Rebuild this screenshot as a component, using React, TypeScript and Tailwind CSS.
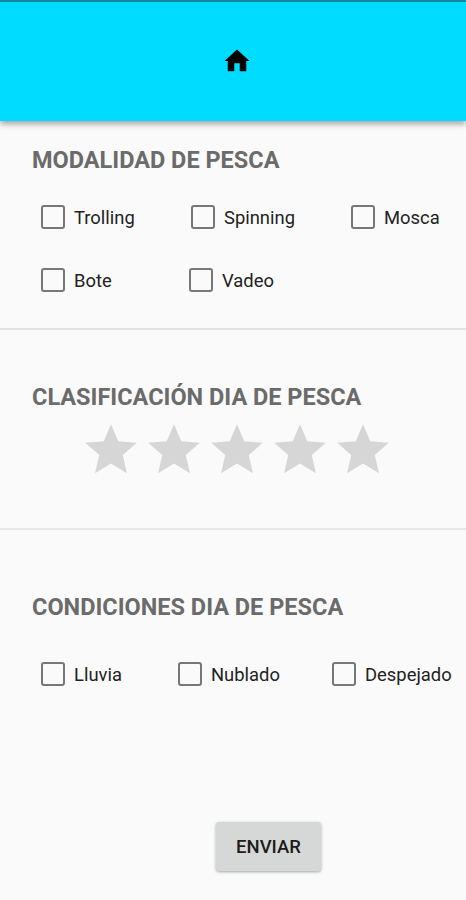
import { useState } from "react";

function HomeIcon() {
  return (
    <svg viewBox="0 0 24 24" fill="#000" className="w-[30px] h-[30px]">
      <path d="M9.8 20.2v-6.4h4.4v6.4h5.2V12H22L12 2.8 2 12h2.6v8.2z" />
    </svg>
  );
}

function Check({ label, className = "" }: { label: string; className?: string }) {
  const [checked, setChecked] = useState(false);

  return (
    <label className={"flex items-center shrink-0 h-6 " + className}>
      <input
        type="checkbox"
        checked={checked}
        onChange={() => setChecked(!checked)}
        className="appearance-none shrink-0 w-6 h-6 rounded-[3px] border-[2.5px] border-[#777777] checked:bg-[#777777]"
      />
      <span className="ml-[9px] pt-0.5 text-[18.4px] leading-6 text-[#222222] whitespace-nowrap">
        {label}
      </span>
    </label>
  );
}

function Title({ children }: { children: string }) {
  return (
    <h2 className="pl-8 text-[23.5px] leading-7 font-bold text-[#6b6b6b] whitespace-nowrap">
      {children}
    </h2>
  );
}

export default function App() {
  const [rating, setRating] = useState(0);

  return (
    <div className="w-full h-[900px] overflow-hidden bg-[#fafafa] font-[Roboto,sans-serif]">
      <div className="h-[2px] bg-[#128ba3]" />
      <header className="h-[119px] pl-[222px] pt-[44px] bg-[#00dcff] shadow-[0_3px_6px_rgba(0,0,0,0.35)]">
        <HomeIcon />
      </header>

      <section className="h-[209px] pt-[25px] border-b-2 border-[#e2e2e2]">
        <Title>MODALIDAD DE PESCA</Title>
        <div className="flex pl-[41px] mt-[31px]">
          <Check label="Trolling" className="w-[150px]" />
          <Check label="Spinning" className="w-[160px]" />
          <Check label="Mosca" />
        </div>
        <div className="flex pl-[41px] mt-[39px]">
          <Check label="Bote" className="w-[148px]" />
          <Check label="Vadeo" />
        </div>
      </section>

      <section className="h-[200px] pt-[53px] border-b-2 border-[#e6e6e6]">
        <Title>CLASIFICACIÓN DIA DE PESCA</Title>
        <div className="flex gap-[1.2px] pl-[79.5px] mt-[8px]">
          {[1, 2, 3, 4, 5].map((n) => (
            <button key={n} onClick={() => setRating(n)} className="shrink-0">
              <svg
                viewBox="0 0 24 24"
                fill={n <= rating ? "#00dcff" : "#d6d6d6"}
                className="w-[62px] h-[62px]"
              >
                <path d="M12 17.27 18.18 21l-1.64-7.03L22 9.24l-7.19-.61L12 2 9.19 8.63 2 9.24l5.46 4.73L5.82 21z" />
              </svg>
            </button>
          ))}
        </div>
      </section>

      <section className="pt-[63px]">
        <Title>CONDICIONES DIA DE PESCA</Title>
        <div className="flex pl-[41px] mt-[41px]">
          <Check label="Lluvia" className="w-[137px]" />
          <Check label="Nublado" className="w-[154px]" />
          <Check label="Despejado" />
        </div>
        <button className="block ml-[216px] mt-[136px] pt-0.5 w-[105px] h-[49px] rounded-[3px] bg-[#d6d7d7] text-[18.5px] font-medium text-[#1c1c1c] shadow-[0_1px_3px_rgba(0,0,0,0.35)]">
          ENVIAR
        </button>
      </section>
    </div>
  );
}
